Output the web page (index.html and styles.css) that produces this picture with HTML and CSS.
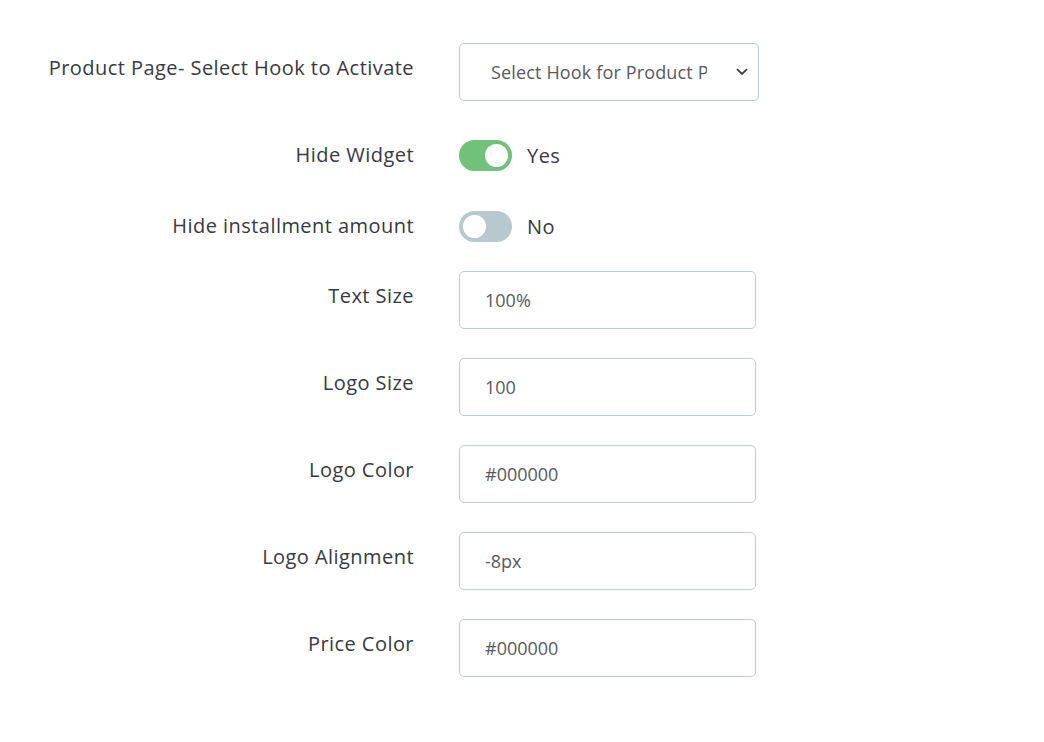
FILE: index.html
```html
<!DOCTYPE html>
<html lang="en">
<head>
<meta charset="utf-8">
<title>Widget settings</title>
<link rel="stylesheet" href="styles.css">
</head>
<body>
<form class="settings">
  <div class="row">
    <label class="label">Product Page- Select Hook to Activate</label>
    <div class="control">
      <div class="select">
        <span class="select-text">Select Hook for Product Page</span>
        <svg class="chevron" viewBox="0 0 12 8" width="12" height="8"><path d="M1 1.2 L6 6 L11 1.2" fill="none" stroke="#3a3f44" stroke-width="1.8"/></svg>
      </div>
    </div>
  </div>
  <div class="row row-toggle row-toggle-a">
    <label class="label">Hide Widget</label>
    <div class="control toggle-control">
      <span class="toggle on"><span class="knob"></span></span>
      <span class="toggle-text">Yes</span>
    </div>
  </div>
  <div class="row row-toggle row-toggle-b">
    <label class="label">Hide installment amount</label>
    <div class="control toggle-control">
      <span class="toggle off"><span class="knob"></span></span>
      <span class="toggle-text">No</span>
    </div>
  </div>
  <div class="row">
    <label class="label">Text Size</label>
    <div class="control"><div class="input">100%</div></div>
  </div>
  <div class="row">
    <label class="label">Logo Size</label>
    <div class="control"><div class="input">100</div></div>
  </div>
  <div class="row">
    <label class="label">Logo Color</label>
    <div class="control"><div class="input">#000000</div></div>
  </div>
  <div class="row">
    <label class="label">Logo Alignment</label>
    <div class="control"><div class="input">-8px</div></div>
  </div>
  <div class="row">
    <label class="label">Price Color</label>
    <div class="control"><div class="input">#000000</div></div>
  </div>
</form>
</body>
</html>
```
FILE: styles.css
```css
html, body {
  margin: 0;
  padding: 0;
  background: #ffffff;
}
body {
  font-family: "Open Sans", "Liberation Sans", sans-serif;
  color: #363a41;
}
.settings {
  padding-top: 43px;
  display: flex;
  flex-direction: column;
  gap: 29px;
}
.row {
  display: grid;
  grid-template-columns: 414px 1fr;
  column-gap: 45px;
  align-items: start;
}
.label {
  text-align: right;
  font-size: 20px;
  letter-spacing: 0.45px;
  line-height: 26px;
  padding-top: 12px;
  color: #363a41;
  white-space: nowrap;
}
.control {
  display: flex;
  align-items: center;
}
.select {
  width: 300px;
  height: 58px;
  box-sizing: border-box;
  border: 1px solid #bbcdd2;
  border-radius: 5px;
  display: flex;
  align-items: center;
  padding-left: 31px;
  padding-right: 10px;
  gap: 10px;
}
.select-text {
  flex: 1;
  overflow: hidden;
  white-space: nowrap;
  font-size: 18px;
  letter-spacing: 0.15px;
  color: #555a5f;
  max-width: 216px;
}
.chevron {
  margin-left: auto;
}
.input {
  width: 297px;
  height: 58px;
  box-sizing: border-box;
  border: 1px solid #bbcdd2;
  border-radius: 5px;
  display: flex;
  align-items: center;
  padding-left: 25px;
  font-size: 18px;
  color: #555a5f;
}
.row-toggle-a { height: 42px; }
.row-toggle-b { height: 41px; }
.toggle-control {
  padding-top: 10px;
  gap: 15px;
}
.toggle {
  position: relative;
  width: 53px;
  height: 31px;
  border-radius: 16px;
  display: inline-block;
}
.toggle.on { background: #70c27b; }
.toggle.off { background: #b7c9cf; }
.knob {
  position: absolute;
  top: 4px;
  width: 23px;
  height: 23px;
  border-radius: 50%;
  background: #ffffff;
}
.toggle.on .knob { right: 4px; }
.toggle.off .knob { left: 4px; }
.toggle-text {
  font-size: 20px;
  letter-spacing: 0.45px;
  color: #363a41;
  line-height: 26px;
}
```
